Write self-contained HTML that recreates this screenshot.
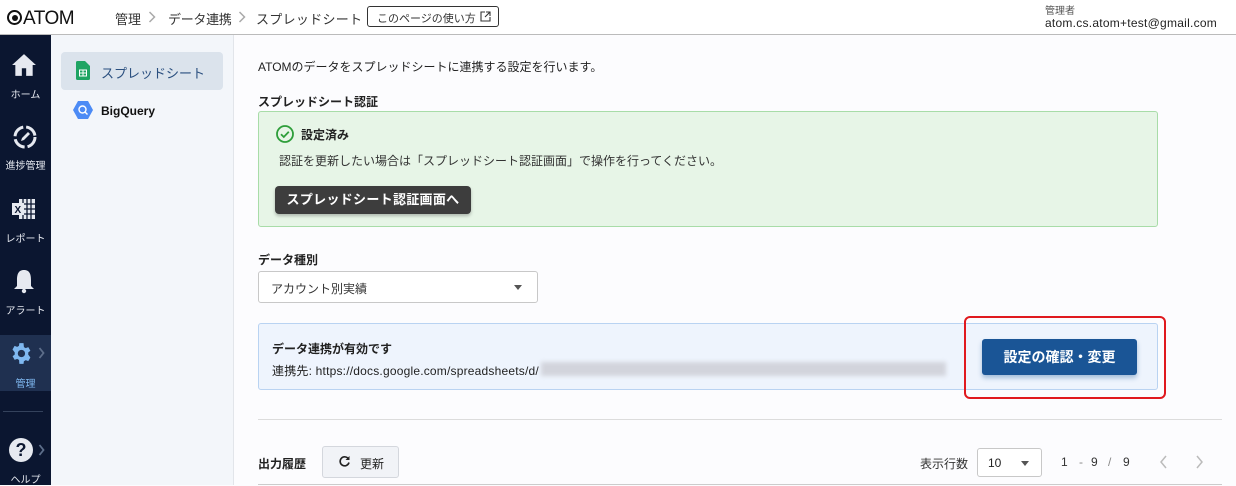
<!DOCTYPE html>
<html><head><meta charset="utf-8"><style>
*{box-sizing:border-box;margin:0;padding:0}
body{width:1236px;height:485px;overflow:hidden;background:#fcfcfe;font-family:"Liberation Sans","Noto Sans CJK JP",sans-serif;color:#222;position:relative}
.a{position:absolute;white-space:nowrap}
.hdr{left:0;top:0;width:1236px;height:35px;background:#fff;border-bottom:1px solid #bbb}
.nav{left:0;top:35px;width:51px;height:450px;background:#0b1630}
.side{left:51px;top:35px;width:183px;height:450px;background:#f3f6fa;border-right:1px solid #e2e5ea}
.nl{color:#e6e9f0;font-size:10px;width:51px;text-align:center}
.b{font-weight:bold}
</style></head><body>
<div class="a hdr"></div>
<div class="a" style="left:7px;top:8px;font-size:19px;color:#111;letter-spacing:-0.5px"><span style="display:inline-block;width:15px;height:15px;border:2px solid #111;border-radius:50%;position:relative;top:1px;margin-right:1px"><span style="position:absolute;left:2.5px;top:2.5px;width:6px;height:6px;background:#111;border-radius:50%"></span></span>ATOM</div>
<div class="a" style="left:115px;top:9px;font-size:13px;color:#333">管理</div>
<svg class="a" style="left:148px;top:11px" width="8" height="12" viewBox="0 0 8 12"><path d="M1.5 1l5 5-5 5" fill="none" stroke="#aaa" stroke-width="1.5"/></svg>
<div class="a" style="left:168px;top:9px;font-size:13px;color:#333;letter-spacing:-0.3px">データ連携</div>
<svg class="a" style="left:238px;top:11px" width="8" height="12" viewBox="0 0 8 12"><path d="M1.5 1l5 5-5 5" fill="none" stroke="#aaa" stroke-width="1.5"/></svg>
<div class="a" style="left:256px;top:9px;font-size:13px;color:#333;letter-spacing:0.3px">スプレッドシート</div>
<div class="a" style="left:367px;top:6px;width:132px;height:21px;border:1px solid #333;border-radius:3px;font-size:11px;color:#333;padding:3px 0 0 9px">このページの使い方
<svg style="position:absolute;left:112px;top:4px" width="11" height="11" viewBox="0 0 11 11"><path d="M5 1H1v9h9V6M6 1h4v4M10 1L5 6" fill="none" stroke="#333" stroke-width="1.1"/></svg></div>
<div class="a" style="left:1045px;top:2px;font-size:10px;color:#555">管理者</div>
<div class="a" style="left:1045px;top:16px;font-size:12px;color:#222;letter-spacing:0.25px">atom.cs.atom+test@gmail.com</div>

<div class="a nav"></div>
<svg class="a" style="left:11px;top:53px" width="26" height="24" viewBox="0 0 24 22"><path d="M12 1 L1 11 H4 V21 H10 V14 H14 V21 H20 V11 H23 Z" fill="#e6e9f0"/></svg>
<div class="a nl" style="top:86px">ホーム</div>
<svg class="a" style="left:12px;top:124px" width="26" height="26" viewBox="0 0 26 26"><circle cx="13" cy="13" r="10" fill="none" stroke="#e6e9f0" stroke-width="3" stroke-dasharray="13 3"/><path d="M9 17 L10 14 L16 8 L18 10 L12 16 Z" fill="#e6e9f0"/></svg>
<div class="a nl" style="top:157px">進捗管理</div>
<svg class="a" style="left:11px;top:198px" width="26" height="22" viewBox="0 0 26 22"><rect x="8" y="1" width="16" height="20" fill="#e6e9f0"/><path d="M12 1v20M16 1v20M20 1v20M8 6h16M8 11h16M8 16h16" stroke="#0b1630" stroke-width="1.3"/><rect x="1" y="5" width="12" height="12" fill="#e6e9f0"/><text x="3.5" y="15" font-size="10" font-weight="bold" fill="#0b1630" font-family="Liberation Sans">X</text></svg>
<div class="a nl" style="top:230px">レポート</div>
<svg class="a" style="left:12px;top:268px" width="24" height="26" viewBox="0 0 24 26"><path d="M12 2 C6 2 5 7 5 12 V18 L2 21 H22 L19 18 V12 C19 7 18 2 12 2Z" fill="#e6e9f0"/><circle cx="12" cy="23" r="2.2" fill="#e6e9f0"/></svg>
<div class="a nl" style="top:302px">アラート</div>
<div class="a" style="left:0;top:335px;width:51px;height:56px;background:#1f3050"></div>
<svg class="a" style="left:8px;top:341px" width="25" height="25" viewBox="0 0 24 24"><path fill="#7fb8f0" d="M19.4 13c.04-.3.06-.6.06-1s-.02-.7-.07-1l2.1-1.650-2-3.46-2.5 1a7 7 0 0 0-1.7-1L14.9 2h-4l-.38 2.65a7 7 0 0 0-1.7 1l-2.5-1-2 3.46L6.5 11a7 7 0 0 0 0 2l-2.1 1.65 2 3.46 2.5-1c.52.4 1.1.73 1.7 1L10.9 22h4l.38-2.65a7 7 0 0 0 1.7-1l2.5 1 2-3.46zM12.9 15.5a3.5 3.5 0 1 1 0-7 3.5 3.5 0 0 1 0 7z"/></svg>
<svg class="a" style="left:38px;top:347px" width="7" height="12" viewBox="0 0 7 12"><path d="M1.5 1l4 5-4 5" fill="none" stroke="#5d6e8a" stroke-width="1.8"/></svg>
<div class="a nl" style="top:375px;color:#7fb8f0">管理</div>
<div class="a" style="left:3px;top:411px;width:40px;height:1px;background:#34425c"></div>
<div class="a" style="left:9px;top:438px;width:24px;height:24px;border-radius:50%;background:#e6e9f0;color:#0b1630;font-weight:bold;font-size:18px;text-align:center;line-height:24px">?</div>
<svg class="a" style="left:38px;top:444px" width="7" height="12" viewBox="0 0 7 12"><path d="M1.5 1l4 5-4 5" fill="none" stroke="#5d6e8a" stroke-width="1.8"/></svg>
<div class="a nl" style="top:471px">ヘルプ</div>

<div class="a side"></div>
<div class="a" style="left:61px;top:52px;width:162px;height:38px;background:#dbe3ec;border-radius:4px"></div>
<svg class="a" style="left:76px;top:61px" width="14" height="19" viewBox="0 0 14 19"><path d="M0 1.5Q0 0 1.5 0H9L14 5V17.5Q14 19 12.5 19H1.5Q0 19 0 17.5Z" fill="#1fa463"/><rect x="3.5" y="9" width="7" height="6" fill="none" stroke="#fff" stroke-width="1"/><path d="M7 9v6M3.5 12h7" stroke="#fff"/></svg>
<div class="a" style="left:101px;top:63px;font-size:13px;color:#2a4f7f">スプレッドシート</div>
<svg class="a" style="left:73px;top:101px" width="20" height="18" viewBox="0 0 20 18"><path d="M5 0H15L20 9L15 18H5L0 9Z" fill="#4c8bf5"/><circle cx="9.5" cy="8.5" r="3.5" fill="none" stroke="#fff" stroke-width="1.4"/><path d="M12 11l2.5 2.5" stroke="#fff" stroke-width="1.4"/></svg>
<div class="a b" style="left:101px;top:104px;font-size:12px;color:#111">BigQuery</div>

<div class="a" style="left:258px;top:58px;font-size:12px;color:#222">ATOMのデータをスプレッドシートに連携する設定を行います。</div>
<div class="a b" style="left:258px;top:93px;font-size:12px">スプレッドシート認証</div>
<div class="a" style="left:258px;top:111px;width:900px;height:116px;background:#e7f5e7;border:1px solid #a8dca8;border-radius:3px"></div>
<svg class="a" style="left:276px;top:125px" width="18" height="18" viewBox="0 0 18 18"><circle cx="9" cy="9" r="8" fill="none" stroke="#2e9e3a" stroke-width="1.8"/><path d="M5 9.2l2.8 2.8 5-5.2" fill="none" stroke="#2e9e3a" stroke-width="1.8"/></svg>
<div class="a b" style="left:301px;top:126px;font-size:12px">設定済み</div>
<div class="a" style="left:279px;top:152px;font-size:12px;color:#333">認証を更新したい場合は「スプレッドシート認証画面」で操作を行ってください。</div>
<div class="a b" style="left:275px;top:186px;width:196px;height:28px;background:#3d3d3d;border-radius:4px;color:#fff;font-size:13px;text-align:center;line-height:28px;letter-spacing:0.3px;box-shadow:0 2px 3px rgba(0,0,0,.25)">スプレッドシート認証画面へ</div>
<div class="a b" style="left:258px;top:251px;font-size:12px">データ種別</div>
<div class="a" style="left:258px;top:271px;width:280px;height:32px;background:#fff;border:1px solid #c8c8c8;border-radius:3px;font-size:12px;padding:8px 0 0 12px;color:#333">アカウント別実績<span style="position:absolute;left:255px;top:13px;border:4px solid transparent;border-top:5px solid #555"></span></div>
<div class="a" style="left:258px;top:323px;width:900px;height:67px;background:#eef4fd;border:1px solid #b9d3f2;border-radius:3px"></div>
<div class="a b" style="left:272px;top:340px;font-size:12px">データ連携が有効です</div>
<div class="a" style="left:272px;top:362px;font-size:12px;color:#222;letter-spacing:0.2px">連携先: https://docs.google.com/spreadsheets/d/</div>
<div class="a" style="left:541px;top:362px;width:405px;height:14px;background:#d2d4dc;filter:blur(2px)"></div>
<div class="a" style="left:964px;top:316px;width:202px;height:83px;border:2px solid #e0191e;border-radius:6px"></div>
<div class="a b" style="left:982px;top:339px;width:155px;height:36px;background:#1a5596;border-radius:3px;color:#fff;font-size:14px;text-align:center;line-height:36px;box-shadow:0 3px 5px rgba(26,85,150,.35)">設定の確認・変更</div>
<div class="a" style="left:258px;top:419px;width:964px;height:1px;background:#dcdcdc"></div>
<div class="a b" style="left:258px;top:455px;font-size:12px">出力履歴</div>
<div class="a" style="left:322px;top:446px;width:77px;height:32px;background:#f1f3f7;border:1px solid #d4d7dd;border-radius:3px;font-size:12px;padding:8px 0 0 37px;color:#222">更新</div>
<svg class="a" style="left:338px;top:455px" width="13" height="13" viewBox="0 0 13 13"><path d="M10.5 4A4.5 4.5 0 1 0 11 7.5" fill="none" stroke="#222" stroke-width="1.6"/><path d="M11.5 1v4h-4z" fill="#222"/></svg>
<div class="a" style="left:920px;top:455px;font-size:12px;color:#333">表示行数</div>
<div class="a" style="left:977px;top:448px;width:65px;height:29px;background:#fff;border:1px solid #c8c8c8;border-radius:3px;font-size:12px;padding:7px 0 0 10px">10<span style="position:absolute;left:43px;top:12px;border:4px solid transparent;border-top:5px solid #555"></span></div>
<div class="a" style="left:1061px;top:455px;font-size:12px;color:#333">1</div>
<div class="a" style="left:1079px;top:455px;font-size:12px;color:#888">-</div>
<div class="a" style="left:1091px;top:455px;font-size:12px;color:#333">9</div>
<div class="a" style="left:1108px;top:455px;font-size:12px;color:#888">/</div>
<div class="a" style="left:1123px;top:455px;font-size:12px;color:#333">9</div>
<svg class="a" style="left:1159px;top:455px" width="9" height="14" viewBox="0 0 9 14"><path d="M7 1L2 7l5 6" fill="none" stroke="#bbb" stroke-width="1.5"/></svg>
<svg class="a" style="left:1195px;top:455px" width="9" height="14" viewBox="0 0 9 14"><path d="M2 1l5 6-5 6" fill="none" stroke="#bbb" stroke-width="1.5"/></svg>
<div class="a" style="left:258px;top:484px;width:964px;height:1px;background:#ccc"></div>
</body></html>
